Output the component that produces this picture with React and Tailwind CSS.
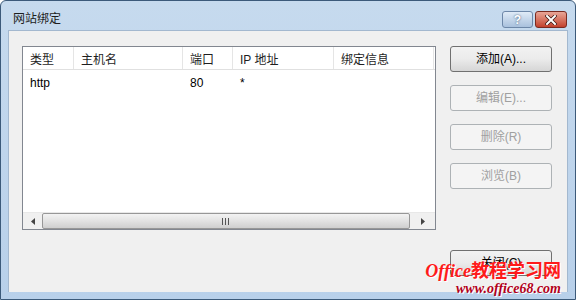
import React from "react";

const cols = [
  { label: "类型", w: "w-[51px]" },
  { label: "主机名", w: "w-[109px]" },
  { label: "端口", w: "w-[50px]" },
  { label: "IP 地址", w: "w-[101px]" },
  { label: "绑定信息", w: "w-[100px]" },
];

const row = ["http", "", "80", "*", ""];

export default function App() {
  return (
    <div
      className="w-[576px] h-[300px] flex flex-col border border-[#3c5a7a] rounded-t-[6px] bg-gradient-to-b from-[#c6daee] to-[#b8d0ea] relative overflow-hidden text-[12px] text-black"
      style={{ fontFamily: '"Liberation Sans", "Noto Sans CJK SC", sans-serif' }}
    >
      {/* Title bar */}
      <div className="h-[29px] flex items-start shrink-0">
        <div className="pl-[12px] pt-[9px] text-[12px] text-[#1e1e1e]">网站绑定</div>
        <div className="ml-auto flex gap-[2px] pt-[10px] pr-[8px]">
          <div className="w-[31px] h-[17px] rounded-[3px] border border-[#6d87a8] bg-gradient-to-b from-[#e0ebf7] to-[#a9c1dd] flex items-center justify-center text-[12px] font-bold text-white [text-shadow:0_0_2px_#2f4a6b] leading-none">
            ?
          </div>
          <div className="w-[32px] h-[17px] rounded-[3px] border border-[#7a2a20] bg-gradient-to-b from-[#e8a597] to-[#c2402c] flex items-center justify-center">
            <svg width="12" height="10" viewBox="0 0 12 10">
              <path d="M2 1 L10 9 M10 1 L2 9" stroke="#3a1510" strokeWidth="3.4" strokeLinecap="square" />
              <path d="M2 1 L10 9 M10 1 L2 9" stroke="#fff" strokeWidth="2" strokeLinecap="square" />
            </svg>
          </div>
        </div>
      </div>

      {/* Client area */}
      <div className="flex-1 mx-[7px] mb-[7px] bg-[#f0f0f0] border border-[#a3b8cf] border-b-0 flex pl-[13px] pr-[15px] pt-[15px]">
        {/* List */}
        <div className="w-[414px] h-[184px] border border-[#828790] bg-white flex flex-col">
          <div className="flex h-[23px] border-b border-[#e0e0e0] shrink-0">
            {cols.map((c, i) => (
              <div
                key={i}
                className={`${c.w} shrink-0 pl-[7px] pt-[4px] border-r border-[#e5e5e5] text-[#1e1e1e]`}
              >
                {c.label}
              </div>
            ))}
          </div>
          <div className="flex h-[22px]">
            {row.map((v, i) => (
              <div key={i} className={`${cols[i].w} shrink-0 pl-[7px] pt-[4px]`}>
                {v}
              </div>
            ))}
          </div>
          <div className="flex-1" />
          {/* Horizontal scrollbar */}
          <div className="h-[17px] flex items-center bg-[#f0f0f0] border-t border-[#e8e8e8] shrink-0">
            <div className="w-[19px] flex justify-center">
              <svg width="4" height="7" viewBox="0 0 4 7">
                <path d="M4 0 L0 3.5 L4 7 Z" fill="#444" />
              </svg>
            </div>
            <div className="flex-1 h-[16px] rounded-[2px] border border-[#979797] bg-gradient-to-b from-[#f3f3f3] via-[#e2e2e2] to-[#cfcfcf] flex items-center justify-center">
              <svg width="8" height="7" viewBox="0 0 8 7">
                <path d="M0.5 0 V7 M3.5 0 V7 M6.5 0 V7" stroke="#555" strokeWidth="1" />
              </svg>
            </div>
            <div className="w-[25px] flex justify-center">
              <svg width="4" height="7" viewBox="0 0 4 7">
                <path d="M0 0 L4 3.5 L0 7 Z" fill="#444" />
              </svg>
            </div>
          </div>
        </div>

        {/* Buttons */}
        <div className="ml-[14px] flex flex-col">
          <Btn label="添加(A)..." />
          <Btn label="编辑(E)..." disabled className="mt-[13px]" />
          <Btn label="删除(R)" disabled className="mt-[13px]" />
          <Btn label="浏览(B)" disabled className="mt-[13px]" />
          <Btn label="关闭(C)" className="mt-[61px]" />
        </div>
      </div>

      {/* Watermark */}
      <div
        className="absolute right-[14px] bottom-[3px] flex flex-col items-end leading-none italic"
        style={{ fontFamily: '"Liberation Serif", "Noto Sans CJK SC", serif' }}
      >
        <div className="text-[18px] font-bold text-[#ff1a1a] [text-shadow:1px_1px_0_#fff]">
          Office<span className="not-italic" style={{ fontFamily: '"Noto Sans CJK SC", sans-serif' }}>教程学习网</span>
        </div>
        <div className="text-[14px] font-bold text-[#b3001a] mt-[2px] [text-shadow:1px_1px_0_#fff]">
          www.office68.com
        </div>
      </div>
    </div>
  );
}

function Btn({ label, disabled, className = "" }) {
  return (
    <div
      className={`w-[102px] h-[26px] rounded-[3px] border flex items-center justify-center ${
        disabled
          ? "border-[#adb2b5] bg-[#f4f4f4] text-[#a0a0a0]"
          : "border-[#707070] bg-gradient-to-b from-[#f2f2f2] via-[#ebebeb] to-[#d6d6d6] text-black"
      } ${className}`}
    >
      {label}
    </div>
  );
}
